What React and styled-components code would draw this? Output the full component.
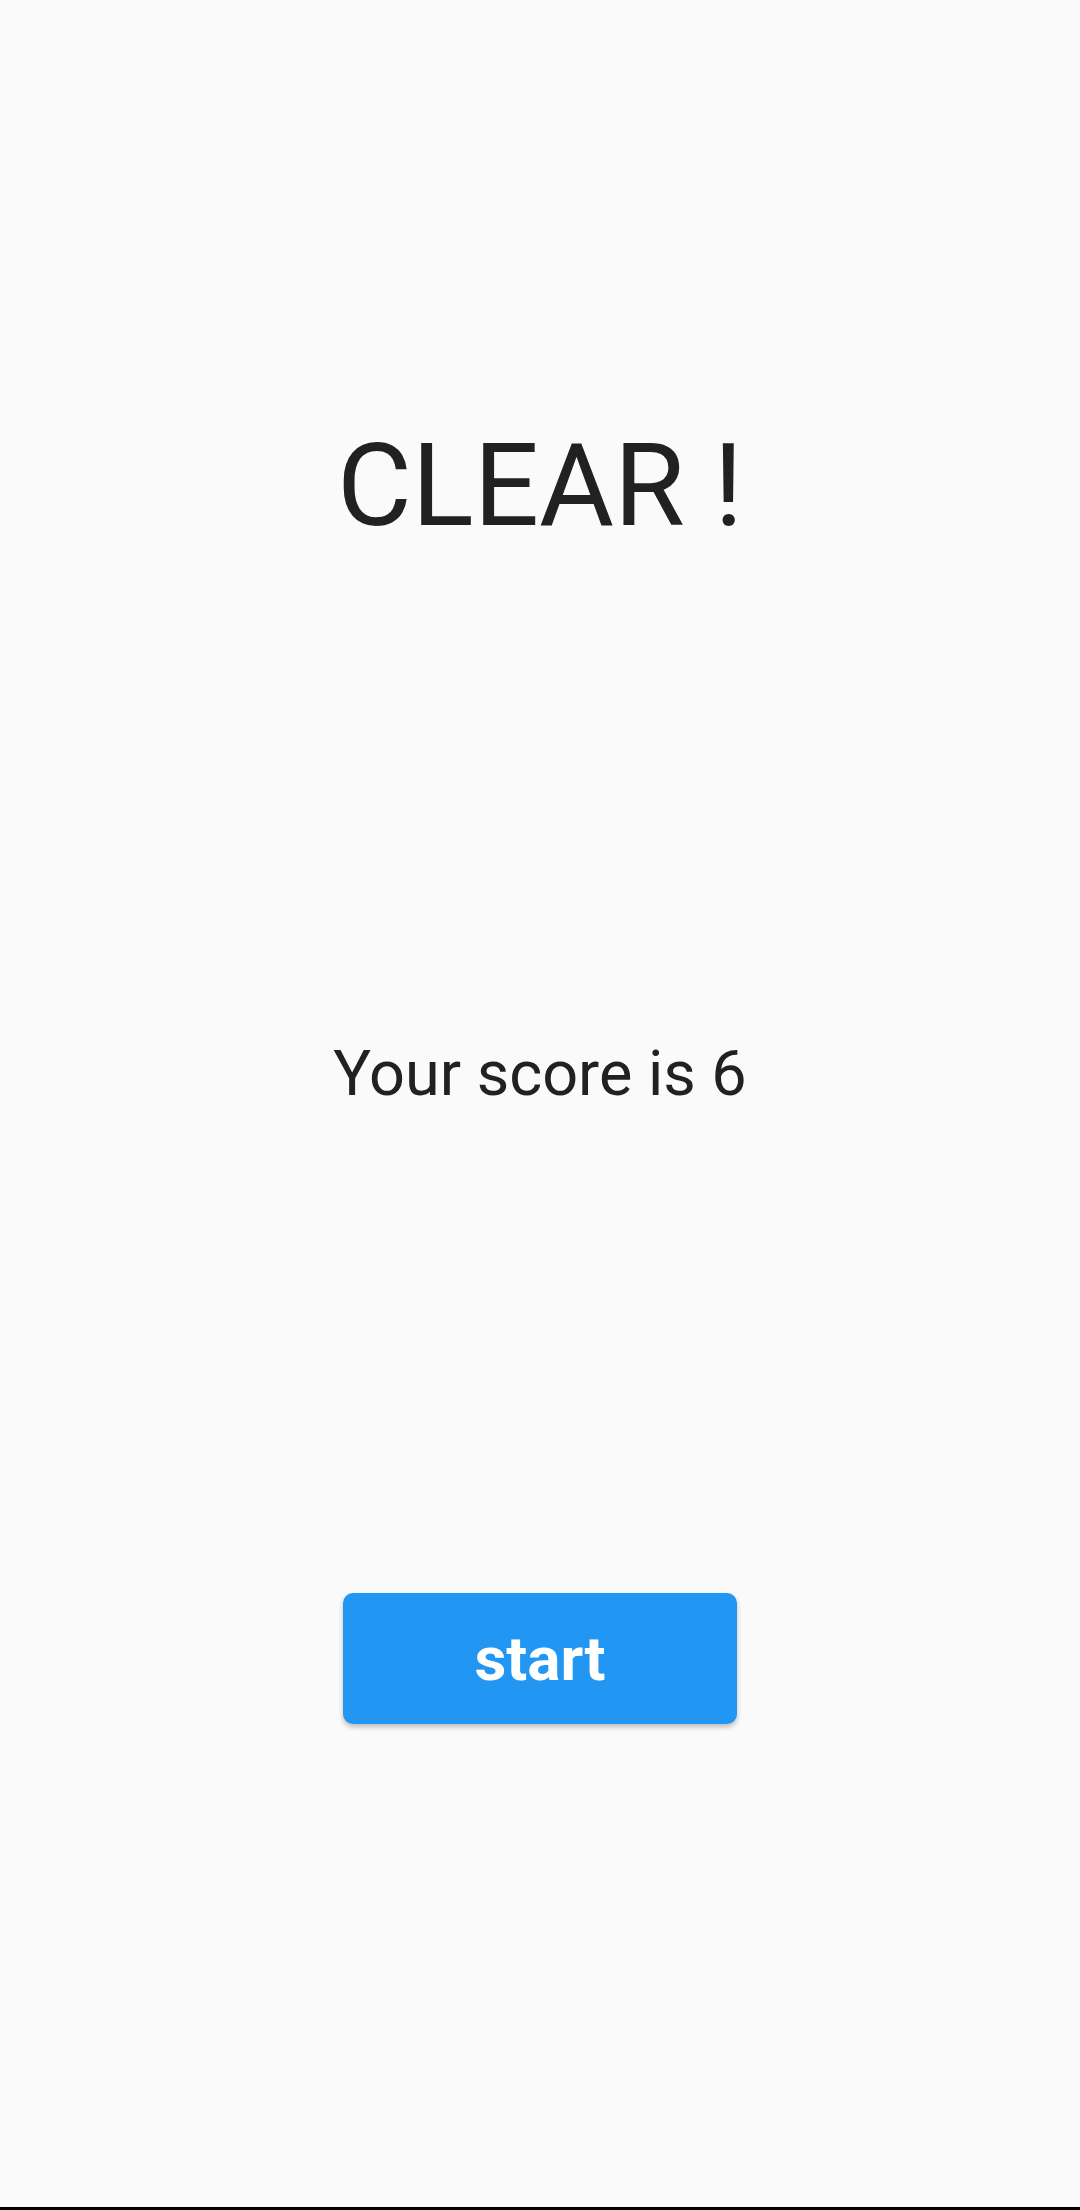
import React from 'react';
import styled, { createGlobalStyle } from 'styled-components';

const GlobalStyle = createGlobalStyle`
  html, body {
    margin: 0;
    padding: 0;
    background: #fafafa;
  }
  body {
    font-family: Roboto, "Liberation Sans", sans-serif;
  }
`;

const Screen = styled.div`
  width: 1080px;
  height: 2210px;
  display: flex;
  flex-direction: column;
  background: #fafafa;
`;

const Content = styled.main`
  flex: 1;
  display: flex;
  flex-direction: column;
  align-items: center;
  padding-top: 428px;
`;

const Title = styled.h1`
  margin: 0 0 499px;
  font-size: 115px;
  line-height: 1;
  font-weight: 400;
  color: #212121;
`;

const Score = styled.p`
  margin: 0 0 488px;
  font-size: 63px;
  line-height: 1;
  color: #212121;
`;

const StartButton = styled.button`
  width: 394px;
  height: 131px;
  border: none;
  border-radius: 10px;
  background: #2196f3;
  color: #fff;
  font-family: Roboto, "Liberation Sans", sans-serif;
  font-size: 62px;
  font-weight: 700;
  box-shadow: 0 3px 5px rgba(0, 0, 0, 0.25);
  cursor: pointer;
`;

const NavBar = styled.div`
  height: 3px;
  background: #000;
`;

export default function App() {
  return (
    <>
      <GlobalStyle />
      <Screen>
        <Content>
          <Title>CLEAR !</Title>
          <Score>Your score is 6</Score>
          <StartButton>start</StartButton>
        </Content>
        <NavBar />
      </Screen>
    </>
  );
}
